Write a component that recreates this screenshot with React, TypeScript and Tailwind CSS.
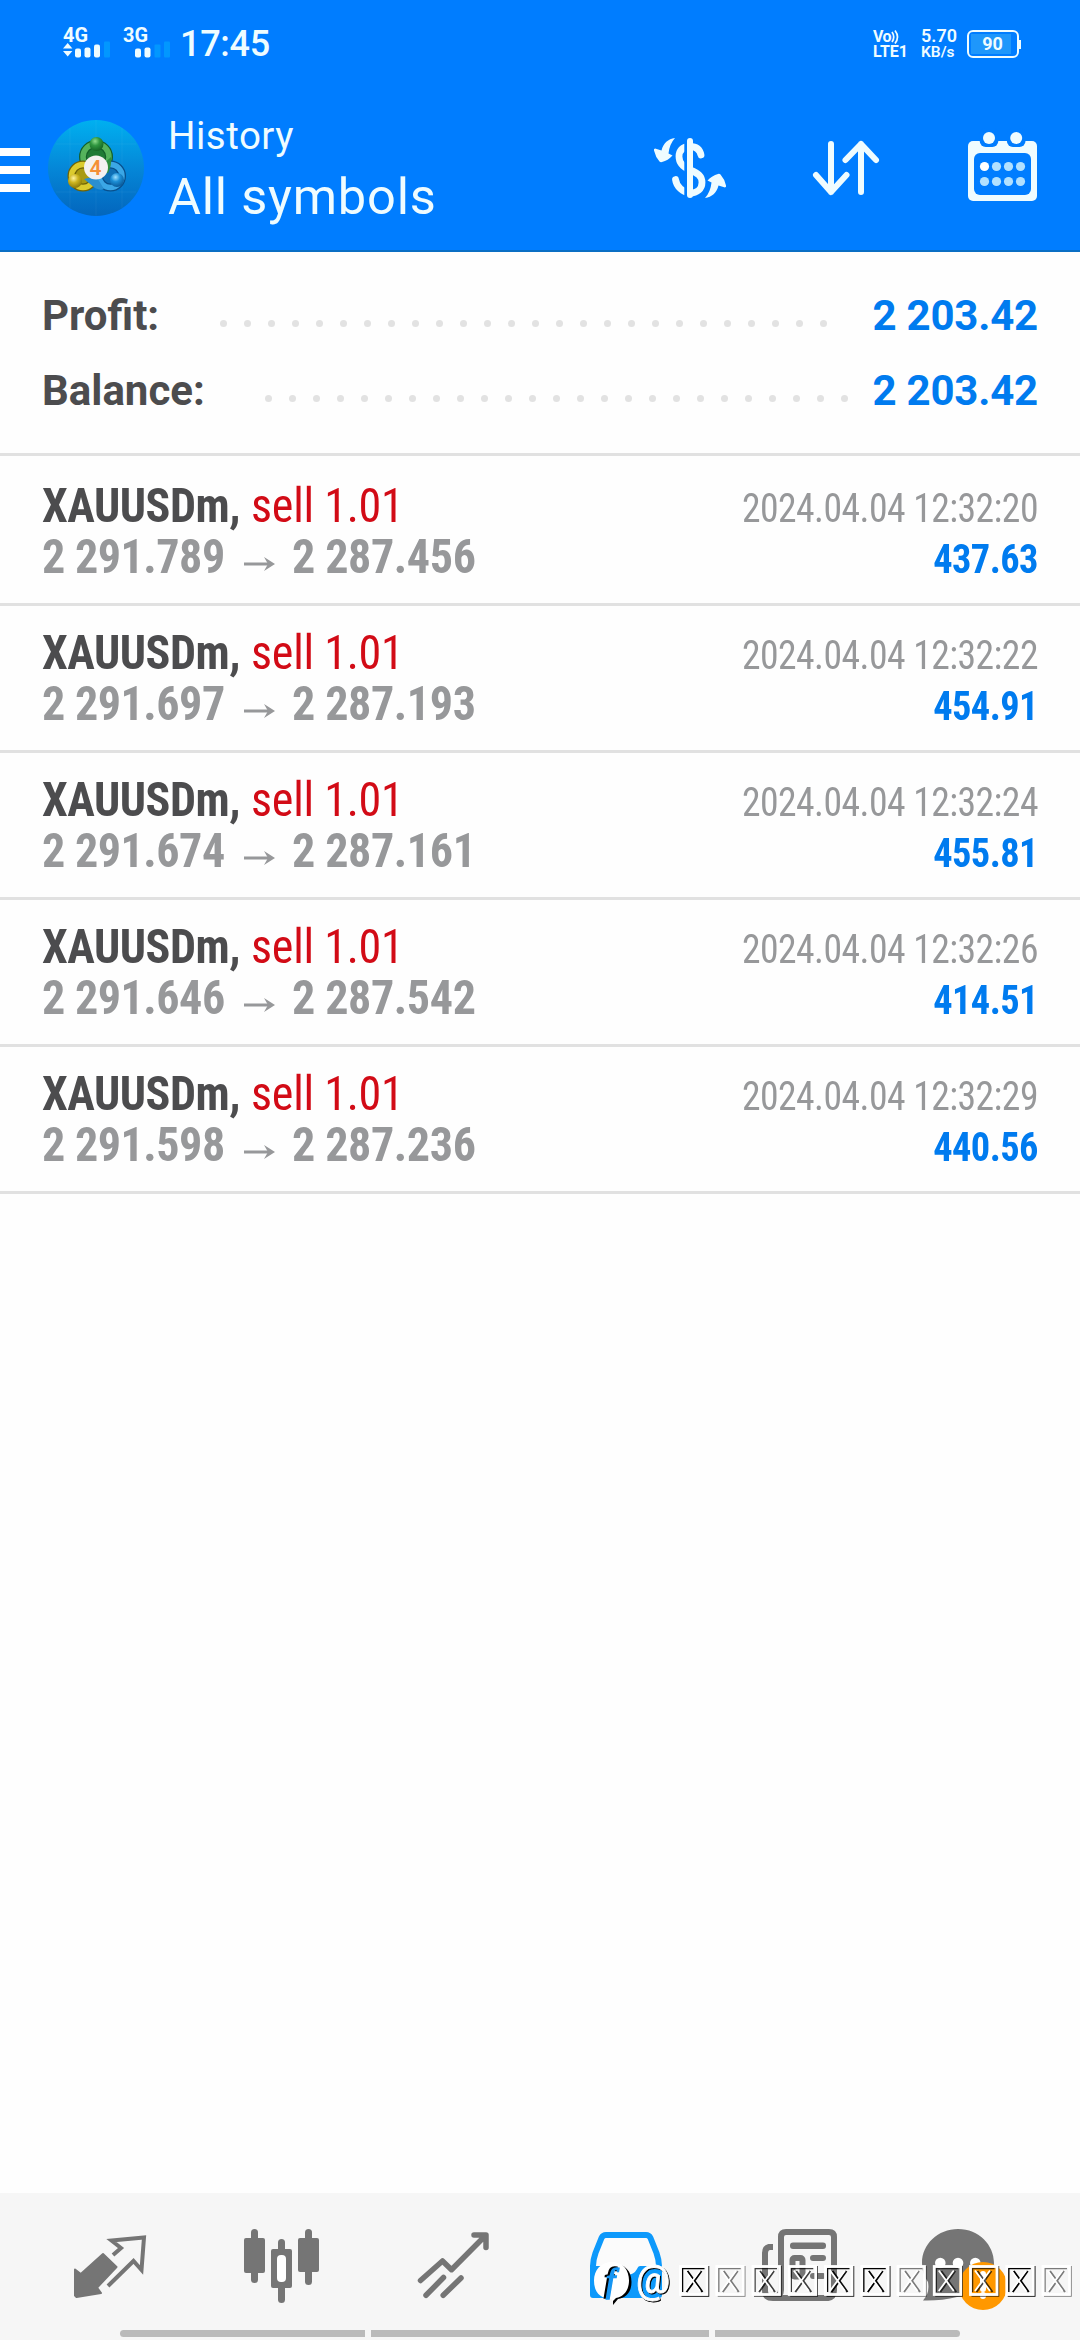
import type { ReactNode } from "react";

const deals = [
  { id: 1, open: "2 291.789", close: "2 287.456", time: "2024.04.04 12:32:20", profit: "437.63" },
  { id: 2, open: "2 291.697", close: "2 287.193", time: "2024.04.04 12:32:22", profit: "454.91" },
  { id: 3, open: "2 291.674", close: "2 287.161", time: "2024.04.04 12:32:24", profit: "455.81" },
  { id: 4, open: "2 291.646", close: "2 287.542", time: "2024.04.04 12:32:26", profit: "414.51" },
  { id: 5, open: "2 291.598", close: "2 287.236", time: "2024.04.04 12:32:29", profit: "440.56" },
];

function StatusBar() {
  return (
    <div className="flex h-[88px] items-center pl-[62px] pr-[59px] text-[#effcff]">
      <svg className="h-[44px] w-[112px]" viewBox="0 -5 112 44" fill="currentColor">
        <text x="1" y="14.500" fontSize="20" fontWeight="700" textLength="25" lengthAdjust="spacingAndGlyphs">4G</text>
        <path d="M1 21.500L5.700 16L10.400 21.500Z M1 24L5.700 29.500L10.400 24Z" />
        <rect x="13" y="21.500" width="6" height="9" rx="2" />
        <rect x="22.500" y="20.500" width="6" height="10" rx="2" />
        <rect x="32" y="17.500" width="6" height="13" rx="2" />
        <rect x="42" y="14.500" width="6" height="16" rx="1" fill="#0297ff" />
        <text x="61" y="14.500" fontSize="20" fontWeight="700" textLength="25" lengthAdjust="spacingAndGlyphs">3G</text>
        <rect x="73" y="21.500" width="6" height="9" rx="2" />
        <rect x="82.500" y="20.500" width="6" height="10" rx="2" />
        <rect x="92.500" y="17.500" width="6" height="13" rx="1" fill="#0297ff" />
        <rect x="102" y="14.500" width="6" height="16" rx="1" fill="#0297ff" />
      </svg>
      <span className="ml-[6px] text-[36px] font-medium leading-none tracking-[-0.3px]">17:45</span>
      <div className="ml-auto flex items-center">
        <div className="flex w-[37px] flex-col font-bold">
          <div className="flex items-center">
            <span className="text-[16px] leading-[14px] tracking-[-0.5px]">Vo</span>
            <svg className="h-[14px] w-[9px]" viewBox="0 0 9 14" fill="none" stroke="currentColor" strokeWidth="1.700">
              <path d="M1 2Q4.500 7 1 12M4 0.500Q9 7 4 13.500" />
            </svg>
          </div>
          <span className="text-[16px] leading-[15px]">LTE1</span>
        </div>
        <div className="ml-[11px] flex w-[37px] flex-col font-semibold">
          <span className="text-[18px] leading-[16px]">5.70</span>
          <span className="text-[15.5px] leading-[16px]">KB/s</span>
        </div>
        <div className="ml-[9px] flex h-[28px] w-[52px] items-center rounded-[6px] border-2 border-current p-[2px]">
          <div className="flex h-full w-[40px] items-center justify-center bg-[#1e97fb] pl-[3px] text-[18px] font-bold leading-none">90</div>
        </div>
        <div className="h-[9px] w-[2px] bg-current" />
      </div>
    </div>
  );
}

function Logo() {
  return (
    <svg className="h-24 w-24" viewBox="0 0 96 96">
      <defs>
        <linearGradient id="disc" x1="0" y1="0" x2="0" y2="1">
          <stop offset="0" stopColor="#00b0f0" />
          <stop offset="0.500" stopColor="#0587d8" />
          <stop offset="1" stopColor="#0366bd" />
        </linearGradient>
        <radialGradient id="green" cx="0.4" cy="0.3" r="0.8">
          <stop offset="0" stopColor="#8fdc8c" />
          <stop offset="0.400" stopColor="#2f9640" />
          <stop offset="1" stopColor="#10591f" />
        </radialGradient>
        <radialGradient id="yellow" cx="0.4" cy="0.3" r="0.8">
          <stop offset="0" stopColor="#fff3a0" />
          <stop offset="0.400" stopColor="#cdb51f" />
          <stop offset="1" stopColor="#7b6a05" />
        </radialGradient>
        <radialGradient id="blue" cx="0.4" cy="0.3" r="0.8">
          <stop offset="0" stopColor="#9fe0ff" />
          <stop offset="0.400" stopColor="#1c8fd6" />
          <stop offset="1" stopColor="#064e8c" />
        </radialGradient>
      </defs>
      <circle cx="48" cy="48" r="48" fill="url(#disc)" />
      <path d="M22 8V88M48 0V96M74 8V88M8 24H88M8 72H88" stroke="#fff" strokeOpacity="0.05" />
      <circle cx="48" cy="37" r="13" fill="#1f7a35" stroke="#14602a" strokeWidth="8" />
      <circle cx="48" cy="37" r="13" fill="none" stroke="#55b35c" strokeWidth="5.500" />
      <circle cx="62.500" cy="56" r="11.500" fill="#0f6fb5" stroke="#084f8c" strokeWidth="8" />
      <circle cx="62.500" cy="56" r="11.500" fill="none" stroke="#3ba7e6" strokeWidth="5.500" />
      <circle cx="35" cy="56" r="11.500" fill="#a89a12" stroke="#6f6206" strokeWidth="8" />
      <circle cx="35" cy="56" r="11.500" fill="none" stroke="#dccb2e" strokeWidth="5.500" />
      <path d="M48 51L63 37Q64 45 60 53Z" fill="#2f8f3e" />
      <path d="M36 59L48 56L56 69Q52 71 47 68Z" fill="#2a8fd0" />
      <circle cx="48.500" cy="24" r="7" fill="url(#green)" />
      <circle cx="27" cy="61" r="7" fill="url(#yellow)" />
      <circle cx="69" cy="60" r="7" fill="url(#blue)" />
      <circle cx="48" cy="47.500" r="12" fill="#f4f1f0" />
      <text x="47.500" y="55" textAnchor="middle" fontSize="21" fontWeight="600" fill="#f59036">4</text>
    </svg>
  );
}

function DollarIcon() {
  return (
    <svg className="h-20 w-20" viewBox="0 0 80 80" fill="currentColor">
      <path
        d="M51 27C49.500 20 45 18.500 40 18.500C32 18.500 29 23 29 28.500C29 36 34 39.500 40 42C48 45 52 48 52 54.500C52 61 47 65 40 65C33 64 26.500 59 25.500 51.500"
        fill="none" stroke="currentColor" strokeWidth="6.800" strokeLinecap="round"
      />
      <rect x="34.300" y="10" width="6" height="60" fill="#007dff" />
      <rect x="37" y="10" width="6" height="60" rx="3" />
      <path d="M25 10C18 11 13.500 15 11.500 22.500L5 20.500Q3.500 21 4 22.500Q5.500 29 9.500 33.500Q10.500 34.500 12 34Q18 32.500 22.500 27.500L18.500 25.500Q19.500 16 25 10Z" />
      <path d="M55 70C62 69 66.500 65 68.500 57.500L75 59.500Q76.500 59 76 57.500Q74.500 51 70.500 46.500Q69.500 45.500 68 46Q62 47.500 57.500 52.500L61.500 54.500Q60.500 64 55 70Z" />
    </svg>
  );
}

function SortIcon() {
  return (
    <svg className="h-20 w-20" viewBox="0 0 80 80" fill="none" stroke="currentColor" strokeWidth="6" strokeLinecap="round" strokeLinejoin="round">
      <path d="M25 16V64M10 47L25 64L40.500 47M55 64V16M39.500 32L55 16L70 32" />
    </svg>
  );
}

function CalendarIcon() {
  return (
    <svg className="h-20 w-20" viewBox="0 0 80 80" fill="currentColor">
      <rect x="6" y="13" width="69" height="60" rx="5" />
      <rect x="12" y="25" width="57" height="42" rx="6" fill="#007dff" />
      {[27, 54.2].map((x) => (
        <g key={x}>
          <rect x={x - 9.3} y="0" width="18.600" height="19" rx="6" fill="#007dff" />
          <circle cx={x} cy="10" r="6" />
        </g>
      ))}
      {[38.5, 53.5].map((y) =>
        [22.5, 34.5, 46.5, 58.5].map((x) => (
          <circle key={`${x}-${y}`} cx={x} cy={y} r="4.600" fill={x === 22.5 && y === 38.5 ? "#fff" : "#b2e1ff"} />
        ))
      )}
    </svg>
  );
}

function Header() {
  return (
    <header className="h-[252px] border-b-2 border-[#0a6fc4] bg-[#007dff]">
      <StatusBar />
      <div className="flex h-[164px] items-center text-[#effcff]">
        <div className="flex w-[30px] flex-col gap-[10px]">
          <div className="h-2 bg-white" />
          <div className="h-2 bg-white" />
          <div className="h-2 bg-white" />
        </div>
        <div className="ml-[18px] mt-[-4px]">
          <Logo />
        </div>
        <div className="ml-[24px] w-[482px] pt-[3px]">
          <div className="text-[38.5px] leading-[50px] tracking-[0.5px]">History</div>
          <div className="text-[50.5px] leading-[72px] tracking-[0.8px]">All symbols</div>
        </div>
        <div className="mb-1 flex gap-[76px]">
          <DollarIcon />
          <SortIcon />
          <CalendarIcon />
        </div>
      </div>
    </header>
  );
}

function SummaryRow({ label, value, dots, dotsEnd }: { label: string; value: string; dots: number; dotsEnd: string }) {
  return (
    <div className="flex h-[75px] items-center text-[42px] leading-[75px]">
      <span className="font-bold text-[#4c4c4e]">{label}</span>
      <div className={`ml-auto mt-[15px] flex gap-[17px] ${dotsEnd}`}>
        {Array.from({ length: dots }, (_, i) => (
          <span key={i} className="h-[7px] w-[7px] rounded-full bg-[#e2e2e2]" />
        ))}
      </div>
      <span className="w-[168px] text-right font-bold tracking-[-0.2px] text-[#007bef]">{value}</span>
    </div>
  );
}

function DealRow({ deal }: { deal: (typeof deals)[number] }) {
  return (
    <div className="flex h-[147px] justify-between border-b-[3px] border-[#e1e1e1] px-[42px] pt-[21px] font-stretch-75%">
      <div className="text-[48px] leading-[51px]">
        <div className="flex whitespace-nowrap">
          <span className="w-[209px] origin-left scale-x-96 font-bold tracking-[-0.5px] text-[#4c4c4e]">XAUUSDm,</span>
          <span className="origin-left scale-x-96 tracking-[-0.25px] text-[#d20b16]">sell 1.01</span>
        </div>
        <div className="flex items-center font-bold text-[#97989a]">
          <span className="w-[202px] origin-left scale-x-96 tracking-[-0.5px]">{deal.open}</span>
          <svg className="mt-[15px] h-4 w-[31px]" viewBox="0 0 31 16">
            <path d="M0 8H24" stroke="currentColor" strokeWidth="3" />
            <path d="M20 1L31 8L20 15L24 8Z" fill="currentColor" />
          </svg>
          <span className="ml-[17px] origin-left scale-x-96 tracking-[-0.4px]">{deal.close}</span>
        </div>
      </div>
      <div className="pt-[3px] text-right text-[40px] leading-[51px]">
        <div className="origin-right scale-x-94 tracking-[-0.55px] text-[#97989a]">{deal.time}</div>
        <div className="origin-right scale-x-96 font-bold tracking-[-0.6px] text-[#007bef]">{deal.profit}</div>
      </div>
    </div>
  );
}

function TabIcon({ children }: { children: ReactNode }) {
  return (
    <div className="flex w-[172px] justify-center pt-[31px]">
      <svg className="h-20 w-20 overflow-visible" viewBox="0 0 80 80" fill="currentColor" strokeLinejoin="round">
        {children}
      </svg>
    </div>
  );
}

function TabBar() {
  return (
    <div className="flex h-[137px] px-6 text-[#757575]">
      <TabIcon>
        <path d="M5 45.500L10.800 50L33 30L46.500 43L27 63.700L31 69L6.500 73L5 71.500Z" stroke="currentColor" strokeWidth="2" />
        <path d="M43 31L51 24L41.500 16.500L74 13.500L71.500 46L63.500 37L38 62" fill="none" stroke="currentColor" strokeWidth="4" strokeLinejoin="miter" />
      </TabIcon>
      <TabIcon>
        <rect x="9" y="5" width="7" height="54" rx="3.500" />
        <rect x="2" y="14" width="21" height="35" rx="2" />
        <rect x="63" y="5" width="7" height="56" rx="3.500" />
        <rect x="56" y="14" width="21" height="34" rx="2" />
        <rect x="36" y="15" width="7" height="64" rx="3.500" />
        <rect x="29" y="25" width="21" height="39" rx="2" />
        <rect x="35" y="31" width="9" height="27" rx="4" fill="#fff" />
      </TabIcon>
      <TabIcon>
        <path
          d="M6.500 56.500L28.500 37L37.500 45.700L71 12M60 11H72V23.500"
          fill="none" stroke="currentColor" strokeWidth="5.500" strokeLinecap="round"
        />
        <path d="M29.500 53.500L12 71.300M47 54L29.200 71.300" fill="none" stroke="currentColor" strokeWidth="5.500" strokeLinecap="round" />
      </TabIcon>
      <TabIcon>
        <path d="M20 11H60Q63 11 64.500 14L70.500 29Q73 36 73 42V71H7V42Q7 36 9.500 29L15.500 14Q17 11 20 11Z" fill="#fbfbfb" stroke="#0d99fb" strokeWidth="6" />
        <path d="M7 42H26Q28 42 29 45Q32 51 40 51Q48 51 51 45Q52 42 54 42H73V71H7Z" fill="#0d99fb" />
      </TabIcon>
      <TabIcon>
        <path d="M15 23H11Q7 24 7 29V67Q7 74 15 74H70Q76 73 76 66V13Q76 8 71 8H28Q23 8 23 13V66Q23 72 16 73" fill="none" stroke="currentColor" strokeWidth="6" />
        <rect x="32" y="18.500" width="36" height="6.500" rx="3" />
        <rect x="34.500" y="34" width="10" height="18.500" rx="2" fill="none" stroke="currentColor" strokeWidth="6" />
        <rect x="52" y="31" width="16" height="6" rx="3" />
        <rect x="52" y="49" width="16" height="6" rx="3" />
      </TabIcon>
      <TabIcon>
        <path d="M28 5C49 5 64 21 64 39C64 60 46 73 27 73Q11 77 -7 76.500Q0 69 -2 58Q-8 50 -8 39C-8 20 8 5 28 5Z" />
        {[10.3, 28, 45.3].map((x) => (
          <circle key={x} cx={x} cy="39" r="5.300" fill="#fff" />
        ))}
        <circle cx="53" cy="62" r="24" fill="#ff9800" />
        <path d="M53 50V65M53 71V72" stroke="#fff" strokeWidth="6" strokeLinecap="round" />
      </TabIcon>
    </div>
  );
}

function GestureBar() {
  return (
    <div className="flex justify-center gap-[6px]">
      <div className="h-[7px] w-[245px] rounded-l-full bg-[#bababa]" />
      <div className="h-[7px] w-[338px] bg-[#bababa]" />
      <div className="h-[7px] w-[245px] rounded-r-full bg-[#bababa]" />
    </div>
  );
}

// shadow strength behind each of the unresolved characters
const boxes = [1, 0.5, 0.75, 0.75, 0.95, 1, 0.5, 0.7, 0.7, 1, 0.5];

function Watermark() {
  return (
    <svg className="absolute bottom-[28px] right-0 h-[52px] w-[490px]" viewBox="0 0 490 52">
      <path d="M24 4C35 4 41.500 11 41.500 22C41.500 33 35 38 28 39L23 45V38" fill="#000" />
      <path d="M22 2C33 2 39 10 39 20.500C39 31 33 37 26 38L22 42V39C10 39 4 32 4 20.500C4 10 11 2 22 2Z" fill="#fff" />
      <text
        x="16" y="32" fontSize="33" fontStyle="italic" fontFamily="Liberation Serif, serif"
        fill="#1696f4" stroke="#1696f4" strokeWidth="1.500" className="drop-shadow-[-1.5px_-1px_0_#000]"
      >
        f
      </text>
      <text
        x="46" y="33" fontSize="38" fill="#fff" stroke="#fff" strokeWidth="0.800"
        className="drop-shadow-[1.5px_1.5px_0_#000]"
      >
        @
      </text>
      {boxes.map((shade, i) => (
        <g key={i} transform={`translate(${89 + i * 36.25} 5)`} fill="none">
          <path d="M2.500 31H29.500V1M3.500 27V3.500H25.500" stroke="#000" strokeOpacity={shade} strokeWidth="1.500" />
          <path d="M7.500 27L22.500 6M8.500 6L23.500 27" stroke="#000" strokeOpacity={shade} strokeWidth="2" />
          <rect x="1.500" y="1.500" width="26.500" height="28" stroke="#fff" strokeWidth="2.800" />
          <path d="M6 5.500L21 26M21 5.500L6 26" stroke="#fff" strokeWidth="1.800" />
        </g>
      ))}
    </svg>
  );
}

export default function App() {
  return (
    <div className="relative flex h-[2340px] w-[1080px] flex-col overflow-hidden bg-[#fefefe] font-[Roboto,sans-serif]">
      <Header />
      <section className="h-[204px] border-b-[3px] border-[#e1e1e1] px-[42px] pt-[26px]">
        <SummaryRow label="Profit:" value="2 203.42" dots={26} dotsEnd="mr-[43px]" />
        <SummaryRow label="Balance:" value="2 203.42" dots={25} dotsEnd="mr-[22px]" />
      </section>
      <main className="flex-1 pt-[3px]">
        {deals.map((deal) => (
          <DealRow key={deal.id} deal={deal} />
        ))}
      </main>
      <footer className="relative h-[147px] bg-[#f6f6f6]">
        <TabBar />
        <GestureBar />
        <Watermark />
      </footer>
    </div>
  );
}
